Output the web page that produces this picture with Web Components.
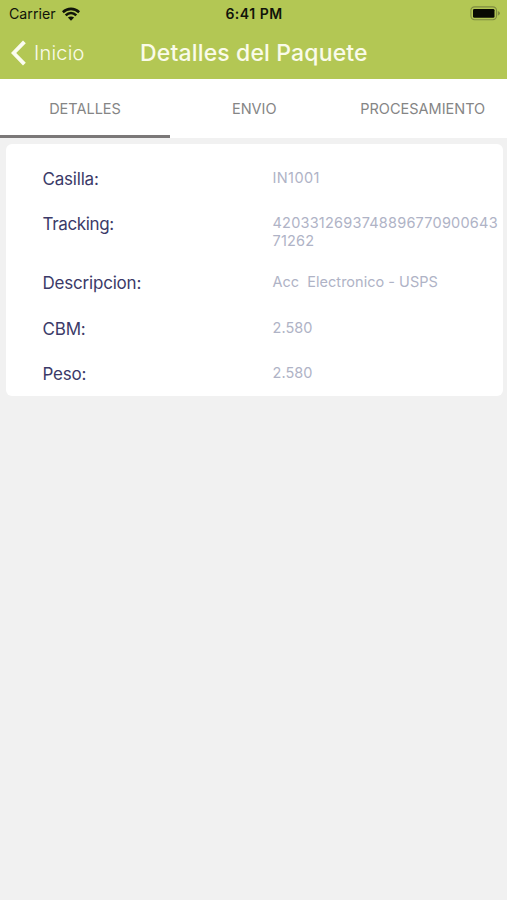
<!DOCTYPE html>
<html lang="es">
<head>
<meta charset="utf-8">
<title>Detalles del Paquete</title>
<style>
html, body { margin: 0; height: 100%; background: #f1f1f1; overflow: hidden; }
body { font-family: Inter, "Liberation Sans", sans-serif; }
</style>
</head>
<body>
<package-screen></package-screen>
<script>
const define = (name, html) => customElements.define(name, class extends HTMLElement {
  constructor() {
    super();
    const t = document.createElement('template');
    t.innerHTML = html;
    this.attachShadow({ mode: 'open' }).append(t.content.cloneNode(true));
  }
});

define('status-bar', `
<style>
:host { display: grid; grid-template-columns: 1fr auto 1fr; align-items: center; height: 27px; padding: 0 7px 0 9px; box-sizing: border-box; color: #11140a; }
.carrier { display: flex; align-items: center; gap: 6px; font: 400 14.2px/20px Inter, sans-serif; }
.time { font: 600 14px/20px Inter, sans-serif; letter-spacing: .5px; margin-right: 1px; }
.battery { justify-self: end; }
svg { display: block; }
</style>
<div class="carrier"><span>Carrier</span>
<svg width="18" height="14" viewBox="0 0 18 14"><g fill="none" stroke="#11140a" stroke-width="2.6"><path d="M.8 5.2C5.5.7 12.5.7 17.2 5.2"/><path d="M3.7 8.4C6.8 5.4 11.2 5.4 14.3 8.4"/></g><path d="M9 13.7 5.9 10.6C7.6 9.1 10.4 9.1 12.1 10.6Z" fill="#11140a"/></svg></div>
<div class="time">6:41 PM</div>
<svg class="battery" width="30" height="15" viewBox="0 0 30 15"><rect x=".9" y=".9" width="25.6" height="12.8" rx="3.6" fill="none" stroke="#7e8b40" stroke-width="1.1"/><rect x="3" y="2.9" width="21.5" height="8.9" rx="1.4" fill="#080a03"/><path d="M27.8 4.9Q30 5.9 30 7.3T27.8 9.7Z" fill="#7e8b40"/></svg>`);

define('nav-bar', `
<style>
:host { display: grid; grid-template-columns: 1fr auto 1fr; height: 50px; padding-top: 1px; align-items: center; color: #fafbea; }
.back { display: flex; align-items: center; gap: 8px; padding-left: 11px; font: 350 20px/24px Inter, sans-serif; letter-spacing: .2px; }
.title { font: 550 23px/28px Inter, sans-serif; letter-spacing: .14px; padding-left: .8px; }
svg { display: block; }
</style>
<div class="back"><svg width="15" height="26" viewBox="0 0 15 26"><path d="M13.4 1.9 2.6 13 13.4 24.1" fill="none" stroke="#fbfcf0" stroke-width="3.9"/></svg><slot name="back"></slot></div>
<div class="title"><slot></slot></div>`);

define('tab-item', `
<style>
:host { display: flex; align-items: center; justify-content: center; box-sizing: border-box; height: 59px; padding-top: 3px; border-bottom: 3px solid transparent; color: #858585; font: 400 14.5px/20px Inter, sans-serif; }
:host([active]) { border-bottom-color: #7b7878; }
</style><slot></slot>`);

define('tab-bar', `
<style>
:host { display: grid; grid-template-columns: 170px 1fr 168.5px; background: #fff; }
</style><slot></slot>`);

define('detail-row', `
<style>
:host { display: grid; grid-template-columns: 230px 1fr; align-items: start; box-sizing: border-box; min-height: 45.1px; padding: 13px 0; }
.label { font: 400 17px/20px Inter, sans-serif; letter-spacing: var(--label-spacing, -.2px); height: 19px; color: #3b3a68; }
.value { font: 400 14.5px/17.7px Inter, sans-serif; letter-spacing: var(--value-spacing, .02px); color: #afb3c6; white-space: pre-wrap; }
</style>
<div class="label"><slot name="label"></slot></div><div class="value"><slot></slot></div>`);

define('detail-card', `
<style>
:host { display: block; box-sizing: border-box; height: 252px; margin: 6px 4.5px 0 6px; padding: 12px 0 0 36.5px; border-radius: 6px; background: #fff; }
</style><slot></slot>`);

define('package-screen', `
<style>
:host { display: block; height: 900px; background: #f1f1f1; }
header { height: 79px; background: #b3c754; }
main { display: block; }
.wide { --value-spacing: .22px; --label-spacing: -.35px; height: 59px; }
.code { --value-spacing: .4px; }
.text { min-height: 45.8px; }
.num { --value-spacing: .05px; }
</style>
<header><status-bar></status-bar><nav-bar><span slot="back">Inicio</span>Detalles del Paquete</nav-bar></header>
<tab-bar><tab-item active>DETALLES</tab-item><tab-item>ENVIO</tab-item><tab-item>PROCESAMIENTO</tab-item></tab-bar>
<main><detail-card>
<detail-row class="code"><span slot="label">Casilla:</span>IN1001</detail-row>
<detail-row class="wide"><span slot="label">Tracking:</span>4203312693748896770900643<br>71262</detail-row>
<detail-row class="text"><span slot="label">Descripcion:</span>Acc  Electronico - USPS</detail-row>
<detail-row class="num"><span slot="label">CBM:</span>2.580</detail-row>
<detail-row class="num"><span slot="label">Peso:</span>2.580</detail-row>
</detail-card></main>`);
</script>
</body>
</html>
